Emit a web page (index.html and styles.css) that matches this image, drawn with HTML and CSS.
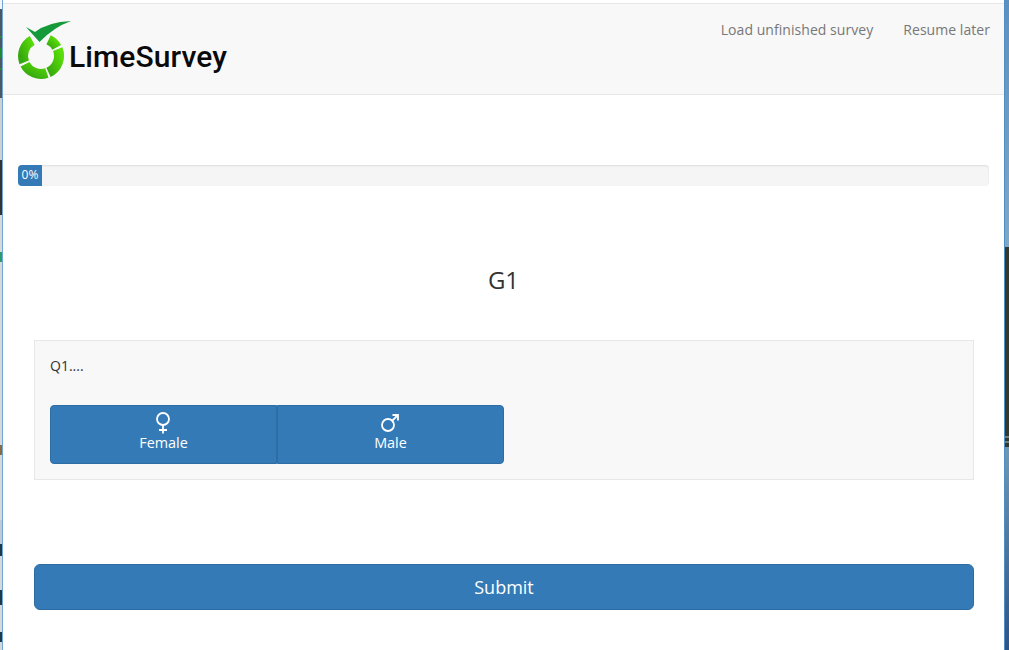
FILE: index.html
```html
<!DOCTYPE html>
<html lang="en">
<head>
<meta charset="utf-8">
<title>LimeSurvey</title>
<link rel="stylesheet" href="styles.css">
</head>
<body>
<div class="edge edge-left"></div>
<div class="page">
  <header class="topbar">
    <a class="brand" href="#">
      <svg class="brand-mark" viewBox="0 0 58 62" width="58" height="62" aria-hidden="true">
        <defs>
          <linearGradient id="lime" x1="0" y1="1" x2="1" y2="0">
            <stop offset="0" stop-color="#36a80f"/>
            <stop offset="1" stop-color="#5add08"/>
          </linearGradient>
        </defs>
        <g fill="none" stroke="url(#lime)" stroke-width="10">
          <path d="M16.2 21.3A18 18 0 0 0 8.2 43.4"/>
          <path d="M9 45.2A18 18 0 0 0 30.9 54"/>
          <path d="M32.5 53.4A18 18 0 0 0 41.7 30.2"/>
          <path d="M32.6 20.7A18 18 0 0 1 40.7 28.3"/>
        </g>
        <path d="M10 8L19 13Q32 3 55 2Q38 8 23.5 23Z" fill="#159a3a"/>
      </svg>
      <span class="brand-name">LimeSurvey</span>
    </a>
    <nav class="topnav">
      <a href="#">Load unfinished survey</a>
      <a href="#">Resume later</a>
    </nav>
  </header>
  <main class="content">
    <div class="progress"><div class="progress-bar">0%</div></div>
    <h1 class="group-title">G1</h1>
    <section class="question">
      <p class="question-text">Q1....</p>
      <div class="choice-group">
        <button class="choice" type="button">
          <svg class="choice-icon" viewBox="0 0 20 24" width="20" height="24" aria-hidden="true">
            <circle cx="9" cy="8" r="6"/><path d="M9 14V22.5M5 19H13"/>
          </svg>
          <span class="choice-label">Female</span>
        </button>
        <button class="choice" type="button">
          <svg class="choice-icon" viewBox="0 0 20 24" width="20" height="24" aria-hidden="true">
            <circle cx="7" cy="14" r="6"/><path d="M11.3 9.7L17 4M11.5 4H17V9.5"/>
          </svg>
          <span class="choice-label">Male</span>
        </button>
      </div>
    </section>
    <button class="submit" type="button">Submit</button>
  </main>
</div>
<div class="edge edge-right"></div>
</body>
</html>
```
FILE: styles.css
```css
* { box-sizing: border-box; }
html, body { height: 100%; }
body {
  margin: 0;
  display: flex;
  overflow: hidden;
  background: #fff;
  color: #333;
  font-family: "Open Sans", sans-serif;
  font-size: 14px;
}
.edge { flex: none; height: 650px; }
.edge-left {
  width: 3px;
  border-right: 1px solid #6ea6d8;
  background: linear-gradient(#f4f4f4 0 9px, #4d5862 9px 36px, #2c8a3a 36px 38px, #4d5862 38px 48px, #1f8a2e 48px 58px, #4d5862 58px 68px, #2c8a3a 68px 70px, #4d5862 70px 98px, #d0d0d0 98px 160px, #333 160px 215px, #d8d8d8 215px 252px, #2c9a6a 252px 262px, #d8d8d8 262px 445px, #8a6a40 445px 455px, #d8d8d8 455px 520px, #c0c8d0 520px 544px, #1d3a4a 544px 556px, #d8d8d8 556px 590px, #1d3a4a 590px 605px, #d8d8d8 605px 632px, #1d3a4a 632px 642px, #d8d8d8 642px 650px);
}
.edge-right {
  width: 5px;
  border-left: 1px solid #4f8fc6;
  background: linear-gradient(#5c90bd 0, #7fa8c8 247px, #333a2c 247px, #333a2c 436px, #6f7f80 436px 438px, #333a2c 438px 441px, #6f7f80 441px 443px, #333a2c 443px 447px, #6f97b5 447px, #2a5585 650px);
}
.page { flex: 1; min-width: 0; padding-top: 3px; }
.topbar {
  height: 92px;
  display: flex;
  justify-content: space-between;
  align-items: flex-start;
  padding: 0 14px 0 13px;
  background: #f8f8f8;
  border-top: 1px solid #e7e7e7;
  border-bottom: 1px solid #e7e7e7;
}
.brand {
  display: flex;
  align-items: center;
  gap: 0;
  padding-top: 15px;
  color: #0a0a0a;
  text-decoration: none;
}
.brand-name {
  margin: 13px 0 0 -5px;
  font-family: Roboto, sans-serif;
  font-size: 30px;
  font-weight: 500;
  letter-spacing: .1px;
  line-height: 32px;
}
.topnav { display: flex; gap: 30px; padding-top: 16px; }
.topnav a { color: #777; letter-spacing: .05px; line-height: 20px; text-decoration: none; }
.content { padding: 70px 15px 0; }
.progress {
  height: 21px;
  background: #f5f5f5;
  border-radius: 4px;
  box-shadow: inset 0 1px 2px rgba(0,0,0,.1);
  overflow: hidden;
}
.progress-bar {
  width: 24px;
  height: 21px;
  background: #337ab7;
  color: #fff;
  font-size: 12px;
  line-height: 20px;
  text-align: center;
}
.group-title {
  margin: 79px 0 45px;
  font-size: 24px;
  font-weight: 400;
  line-height: 30px;
  text-align: center;
}
.question {
  height: 140px;
  margin: 0 0 84px 16px;
  width: 940px;
  padding: 15px;
  background: #f8f8f8;
  border: 1px solid #e7e7e7;
}
.question-text { margin: 0; line-height: 20px; }
.choice-group { display: flex; width: 454px; margin-top: 29px; }
.choice {
  flex: 1;
  height: 59px;
  display: flex;
  flex-direction: column;
  align-items: center;
  padding: 4px 0 0;
  background: #337ab7;
  border: 1px solid #2e6da4;
  color: #fff;
  font: inherit;
  line-height: 20px;
}
.choice:first-child { border-radius: 4px 0 0 4px; }
.choice:last-child { border-radius: 0 4px 4px 0; }
.choice-icon { margin-top: 1px; fill: none; stroke: #fff; stroke-width: 1.8; }
.choice-label { margin-top: -2px; font-size: 14.4px; }
.submit {
  display: block;
  width: 940px;
  height: 46px;
  margin-left: 16px;
  background: #337ab7;
  border: 1px solid #2e6da4;
  border-radius: 6px;
  color: #fff;
  font: inherit;
  font-size: 18px;
}
```
